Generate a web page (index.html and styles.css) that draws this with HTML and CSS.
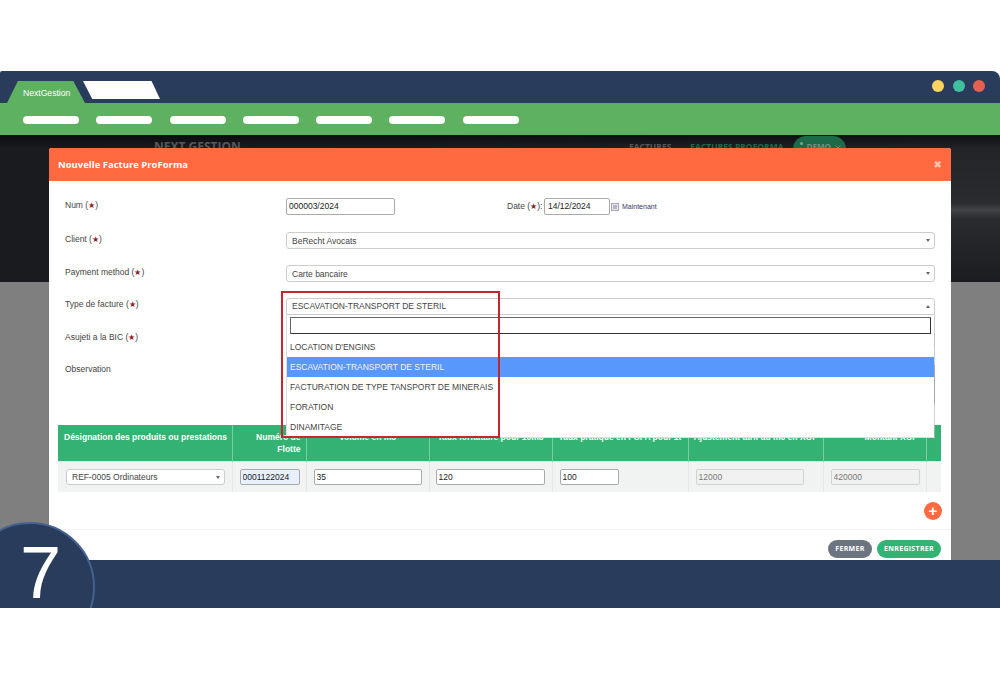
FILE: index.html
```html
<!DOCTYPE html>
<html lang="fr">
<head>
<meta charset="utf-8">
<title>NextGestion</title>
<link rel="stylesheet" href="styles.css">
</head>
<body>
<div class="frame">
<div class="window">
  <header class="titlebar">
    <div class="tab tab-active">NextGestion</div>
    <div class="tab tab-blank"></div>
    <div class="dots"><i class="dot dot-y"></i><i class="dot dot-g"></i><i class="dot dot-r"></i></div>
  </header>
  <nav class="navbar">
    <i class="pill"></i><i class="pill"></i><i class="pill"></i><i class="pill"></i><i class="pill"></i><i class="pill"></i><i class="pill"></i>
  </nav>
  <main class="content">
    <section class="hero">
      <span class="brand">NEXT GESTION</span>
      <span class="hero-link">FACTURES</span>
      <span class="hero-link hero-link-active">FACTURES PROFORMA</span>
      <span class="demo"><i class="demo-dot"></i>DEMO<svg class="demo-chev" viewBox="0 0 6 4" width="6" height="4"><path d="M.5.5 3 3 5.5.5" fill="none" stroke="#7d8a84"/></svg></span>
    </section>
    <section class="modal">
      <div class="modal-head"><span>Nouvelle Facture ProForma</span><span class="close">&#10006;</span></div>
      <div class="modal-body">
        <div class="row">
          <label class="lab">Num (<b class="req">&#9733;</b>)</label>
          <input class="inp inp-num" value="000003/2024">
          <label class="lab-date">Date (<b class="req">&#9733;</b>):</label>
          <input class="inp inp-date" value="14/12/2024">
          <svg class="cal" viewBox="0 0 8 8" width="8" height="8"><rect x=".5" y=".5" width="7" height="7" fill="#e4e4ea" stroke="#a9a9b6"/><path d="M2 3h4M2 5h4" stroke="#8a8a9c"/></svg>
          <span class="now">Maintenant</span>
        </div>
        <div class="row">
          <label class="lab">Client (<b class="req">&#9733;</b>)</label>
          <div class="sel">BeRecht Avocats<i class="caret"></i></div>
        </div>
        <div class="row">
          <label class="lab">Payment method (<b class="req">&#9733;</b>)</label>
          <div class="sel">Carte bancaire<i class="caret"></i></div>
        </div>
        <div class="row">
          <label class="lab lab-up">Type de facture (<b class="req">&#9733;</b>)</label>
          <div class="sel sel-open">ESCAVATION-TRANSPORT DE STERIL<i class="caret caret-up"></i>
            <div class="drop">
              <div class="search"></div>
              <div class="opt">LOCATION D'ENGINS</div>
              <div class="opt opt-on">ESCAVATION-TRANSPORT DE STERIL</div>
              <div class="opt">FACTURATION DE TYPE TANSPORT DE MINERAIS</div>
              <div class="opt">FORATION</div>
              <div class="opt">DINAMITAGE</div>
            </div>
          </div>
        </div>
        <div class="row">
          <label class="lab lab-up">Asujeti a la BIC (<b class="req">&#9733;</b>)</label>
          <div class="sel"></div>
        </div>
        <div class="row row-obs">
          <label class="lab lab-up2">Observation</label>
          <div class="area"></div>
        </div>
        <table class="grid">
          <colgroup>
            <col class="c1"><col class="c2"><col class="c3"><col class="c4"><col class="c5"><col class="c6"><col class="c7"><col class="c8">
          </colgroup>
          <thead>
            <tr>
              <th class="th-left">Désignation des produits ou prestations</th>
              <th class="th-right">Numéro de Flotte</th>
              <th>Volume en m3</th>
              <th>Taux forfaitaire pour 10m3</th>
              <th>Taux pratiqué en FCFA pour 1t</th>
              <th>Ajustement tarif au m3 en XOF</th>
              <th class="th-right th-amount">Montant XOF</th>
              <th></th>
            </tr>
          </thead>
          <tbody>
            <tr>
              <td><div class="sel sel-cell">REF-0005 Ordinateurs<i class="caret"></i></div></td>
              <td><input class="inp inp-flotte" value="0001122024"></td>
              <td><input class="inp w108" value="35"></td>
              <td><input class="inp w109" value="120"></td>
              <td><input class="inp w59" value="100"></td>
              <td><input class="inp inp-ro w108" value="12000" readonly></td>
              <td><input class="inp inp-ro w89" value="420000" readonly></td>
              <td></td>
            </tr>
          </tbody>
        </table>
        <div class="add-row"><span class="add">+</span></div>
      </div>
      <div class="modal-foot">
        <span class="btn btn-grey">FERMER</span>
        <span class="btn btn-green">ENREGISTRER</span>
      </div>
      <div class="redbox"></div>
    </section>
  </main>
  <footer class="bottombar"></footer>
  <div class="badge"></div>
</div>
<div class="badge-num">7</div>
</div>
</body>
</html>
```
FILE: styles.css
```css
* { box-sizing: border-box; }
html, body { margin: 0; padding: 0; background: #fff; }
body { height: 679px; overflow: hidden; padding-top: 71px; font-family: "Liberation Sans", Arial, sans-serif; }

.frame { position: relative; height: 537px; }
.window { position: relative; height: 537px; display: flex; flex-direction: column; overflow: hidden; border-radius: 2px 8px 0 0; }

.titlebar { height: 32px; flex: none; background: #293c5c; display: flex; padding-left: 7px; position: relative; }
.tab { height: 22px; margin-top: 10px; flex: none; }
.tab-active { width: 78px; background: #5eb160; color: #fff; font-size: 8.6px; line-height: 24px; padding-left: 16px; clip-path: polygon(0 100%, 14% 0, 85% 0, 100% 100%); }
.tab-blank { width: 77px; height: 18px; margin-left: -2px; background: #fff; clip-path: polygon(0 0, 89% 0, 100% 100%, 12% 100%); }
.dots { margin-left: auto; display: flex; gap: 8.5px; padding: 9px 15px 0 0; }
.dot { width: 12px; height: 12px; border-radius: 50%; }
.dot-y { background: #fbd35f; }
.dot-g { background: #3fbf9d; }
.dot-r { background: #e5604e; }

.navbar { height: 32px; flex: none; background: #5eb160; display: flex; align-items: center; gap: 17.3px; padding: 1px 0 0 23px; }
.pill { width: 56px; height: 8px; background: #fff; border-radius: 4px; }

.content { flex: 1; position: relative; overflow: hidden; background: #7f7f7f; }
.hero { height: 147px; display: flex; align-items: flex-start; padding: 1px 0 0 154px; background: linear-gradient(180deg, rgba(0,0,0,.55) 0, rgba(0,0,0,0) 10%), linear-gradient(90deg, #1a1b1f 0, #1a1b1f 8%, rgba(26,27,31,0) 93%), linear-gradient(180deg, #222327 0, #2a2b2f 46%, #424347 51%, #2a2b2f 57%, #1b1c20 100%); font-family: "Open Sans", sans-serif; font-weight: 700; color: #56585c; }
.brand { font-size: 12px; line-height: 22px; width: 475px; white-space: nowrap; }
.hero-link { font-size: 8.5px; line-height: 22px; margin-right: 19px; white-space: nowrap; }
.hero-link-active { color: #1f6b49; margin-right: 9px; }
.demo { display: flex; align-items: flex-start; width: 53px; height: 26px; border-radius: 13px; background: #1d6a48; color: #7d8a84; font-size: 8px; line-height: 22px; padding-left: 7px; white-space: nowrap; }
.demo-dot { width: 3px; height: 3px; margin: 6px 4px 0 0; border-radius: 50%; background: #8a9a92; flex: none; }
.demo-chev { margin: 9px 0 0 4px; flex: none; }

.modal { position: absolute; left: 49px; top: 13px; width: 902px; height: 430px; background: #fff; border-radius: 3px 3px 0 0; display: flex; flex-direction: column; }
.modal-head { height: 33px; flex: none; background: #ff6a40; border-radius: 3px 3px 0 0; display: flex; justify-content: space-between; align-items: center; padding: 0 9px 0 9px; color: #fff; font-family: "Open Sans", sans-serif; font-weight: 700; font-size: 9.5px; }
.close { font-family: "DejaVu Sans", sans-serif; font-size: 10px; opacity: .6; }
.modal-body { padding: 17px 10px 0 9px; flex: none; height: 349px; border-bottom: 1px solid #f2f2f2; }

.row { display: flex; align-items: flex-start; height: 17px; margin-bottom: 16px; padding-left: 7px; }
.row:first-child { margin-bottom: 17px; }
.row-obs { height: 41px; margin-bottom: 20px; }
.lab { width: 221px; flex: none; font-size: 8.5px; line-height: 14px; color: #444; }
.lab-up { line-height: 12px; }
.lab-up2 { line-height: 10px; }
.lab-date { margin-left: 112px; width: 37px; flex: none; font-size: 8.5px; line-height: 17px; color: #444; white-space: nowrap; }
.req { color: #8f2226; font-size: 7.5px; font-weight: 400; }

.inp { display: block; height: 16.5px; padding: 0 2px; border: 1px solid #aaa; border-radius: 2px; background: #fff; color: #222; font: 8.5px "Liberation Sans", Arial, sans-serif; outline: 0; }
.inp-num { width: 109px; }
.inp-date { width: 66px; padding-left: 3px; }
.cal { margin: 5px 0 0 1px; flex: none; }
.now { margin-left: 3px; font-size: 7px; line-height: 18px; color: #343a6b; white-space: nowrap; }

.sel { position: relative; width: 649px; height: 17px; flex: none; border: 1px solid #ccc; border-radius: 3px; background: #fff; padding-left: 5px; font-size: 8.5px; line-height: 16px; color: #444; }
.sel-open { border-radius: 3px 3px 0 0; line-height: 14px; }
.caret { position: absolute; right: 4px; top: 6px; border: 2.5px solid transparent; border-top: 3px solid #666; border-bottom: 0; }
.caret-up { border-top: 0; border-bottom: 3px solid #666; }

.drop { position: absolute; left: -1px; top: 16px; width: 649px; height: 123px; background: #fff; background-clip: padding-box; border: 1px solid #ddd; border-top: 0; border-right-color: rgba(190,190,190,.7); padding-top: 2px; z-index: 2; }
.search { height: 17px; margin: 0 3px 3px 3px; border: 1.5px solid #333; border-top-color: #666; border-left-color: #666; border-radius: 1px; }
.opt { height: 20px; padding-left: 3px; font-size: 8.5px; line-height: 20px; color: #444; white-space: nowrap; }
.opt-on { background: #5897fb; color: #f4f4f4; }

.area { width: 649px; height: 41px; flex: none; border: 1px solid #777; border-radius: 2px; }

.grid { width: 883px; border-collapse: collapse; table-layout: fixed; }
.c1 { width: 174px; } .c2 { width: 74px; } .c3 { width: 123px; } .c4 { width: 123px; }
.c5 { width: 136px; } .c6 { width: 135px; } .c7 { width: 103px; } .c8 { width: 15px; }
.grid th { height: 36px; padding: 6px 2px 0; vertical-align: top; text-align: center; background: #34b273; border-right: 1px solid #7bcca3; color: #fff; font-size: 8.5px; line-height: 12px; font-weight: 700; white-space: nowrap; }
.grid th:last-child { border-right: 0; }
.grid th.th-left { padding-left: 6px; text-align: left; }
.grid th.th-right { padding-right: 5px; text-align: right; white-space: normal; }
.grid th.th-amount { padding-right: 8px; }
.grid td { height: 31px; padding: 0 0 0 7px; background: #f1f2f2; border-right: 1px solid #e6e7e7; border-top: 1px solid #dfe8e2; }
.grid td:first-child { padding-left: 8px; }
.grid td:nth-child(4) { padding-left: 6px; }
.grid td:last-child { border-right: 0; }
.sel-cell { width: 159px; height: 16px; line-height: 15px; }
.inp-flotte { width: 60px; background: #e8f0fe; }
.w108 { width: 108px; }
.w109 { width: 109px; }
.w59 { width: 59px; }
.w89 { width: 89px; }
.inp-ro { background: #f1f1f1; border-color: #d2d2d2; color: #777; }

.add-row { display: flex; justify-content: flex-end; padding: 10px 0 0; margin-right: -1px; }
.add { width: 18px; height: 18px; border-radius: 50%; background: #ff6a40; color: #fff; font-size: 15px; font-weight: 700; line-height: 17px; text-align: center; }

.modal-foot { display: flex; justify-content: flex-end; gap: 5px; padding: 10px 10px 0 0; }
.btn { height: 18px; border-radius: 9px; color: #fff; font-family: "Open Sans", sans-serif; font-weight: 700; font-size: 7px; letter-spacing: .3px; line-height: 18px; text-align: center; }
.btn-grey { width: 44px; background: #6c7480; }
.btn-green { width: 64px; background: #34b273; }

.redbox { position: absolute; left: 232px; top: 143px; width: 219px; height: 147px; border: 2px solid #c3282d; z-index: 3; pointer-events: none; }

.bottombar { height: 48px; flex: none; background: #293c5c; position: relative; }
.badge { position: absolute; left: -35px; top: 451px; width: 130px; height: 130px; border-radius: 50%; background: #293c5c; border: 2px solid #44628f; }
.badge-num { position: absolute; left: 20px; top: 472px; height: 60px; color: #fff; font-size: 74px; line-height: 60px; }
```
